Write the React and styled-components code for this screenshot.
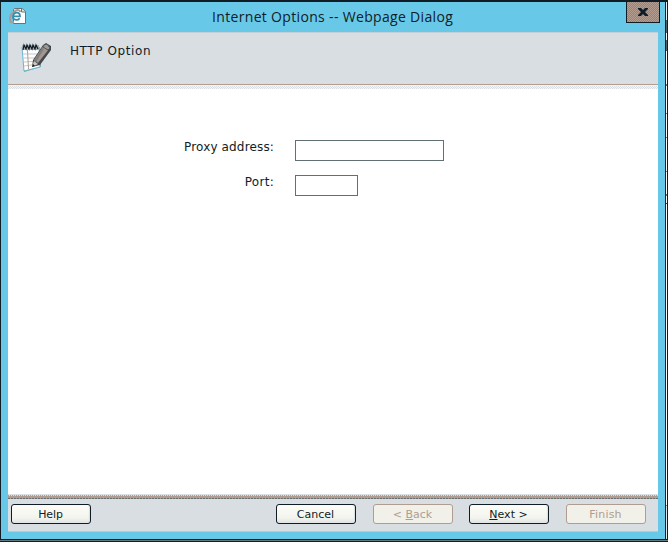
import React from 'react';
import styled, { createGlobalStyle } from 'styled-components';

const ink = '#101c26';
const blue = '#68c8e8';
const panel = '#d9dee2';
const taupe = '#b09c90';

const GlobalStyle = createGlobalStyle`
  * { box-sizing: border-box; }
  body { margin: 0; background: ${ink}; overflow: hidden; }
`;

const Desktop = styled.div`
  display: grid;
  grid-template-columns: 666px 1px 1px;
  width: 668px;
  height: 542px;
  background: linear-gradient(${ink}, ${ink}) 0 0 / 100% 540px no-repeat, linear-gradient(#68797e, #68797e) 0 540px / 100% 1px no-repeat, ${ink};
`;

const WindowFrame = styled.section`
  display: flex;
  flex-direction: column;
  width: 666px;
  height: 540px;
  padding: 0 7px 7px;
  background: ${blue};
  border: solid ${ink};
  border-width: 2px 1px 1px;
  color: ${ink};
`;

const BackgroundEdge = styled.div`
  margin: 2px 0 0;
  height: 537px;
  background: linear-gradient(#e8eff1 0 18px, #53656c 18px 31px, #fff 31px 38px, #53656c 38px 49px, #fff 49px 82px, #697b80 82px 84px, #fff 84px 111px, #697b80 111px 112px, #fff 112px 135px, #697b80 135px 136px, #fff 136px 169px, #697b80 169px 170px, #fff 170px 192px, #697b80 192px 194px, #fff 194px 201px, #33454c 201px 202px, #fff 202px 503px, #697b80 503px 504px, #dfe8eb 504px);
`;

const TitleBar = styled.header`
  display: grid;
  grid-template-columns: 40px 1fr 40px;
  height: 30px;
  flex: none;
`;

const PageIcon = styled.svg`
  width: 18px;
  height: 18px;
  margin: 5px 0 0 1px;
`;

const Title = styled.h1`
  margin: 0;
  padding: 5px 0 0 164px;
  font: 400 14px/20px "Open Sans", sans-serif;
  letter-spacing: .33px;
  white-space: nowrap;
`;

const CloseButton = styled.button`
  display: flex;
  align-items: center;
  justify-content: center;
  width: 34px;
  height: 21px;
  margin-left: 8px;
  padding: 0;
  border: 1px solid ${ink};
  border-top: 0;
  background: repeating-conic-gradient(#b39d91 0 25%, #84888a 0 50%) 0 0 / 2px 2px;
`;

const Content = styled.main`
  display: flex;
  flex-direction: column;
  width: 650px;
  height: 500px;
  background: #fff;
`;

const Banner = styled.div`
  display: flex;
  height: 53px;
  flex: none;
  background: ${panel};
  border-top: 1px solid #c4d0d5;
  border-bottom: 1px solid ${taupe};
`;

const BannerShade = styled.div`
  height: 4px;
  flex: none;
  background: linear-gradient(#f4f3f2 0 1px, transparent 1px), repeating-conic-gradient(#d9dee2 0 25%, #f7f6f3 0 50%) 0 0 / 2px 2px;
`;

const NotebookIcon = styled.svg`
  width: 34px;
  height: 34px;
  margin: 8px 0 0 10px;
`;

const StepTitle = styled.h2`
  margin: 9px 0 0 18px;
  font: 400 12px/18px "DejaVu Sans", sans-serif;
  letter-spacing: .6px;
  white-space: nowrap;
`;

const Form = styled.form`
  display: grid;
  align-content: start;
  flex: 1;
  gap: 14px;
  padding-top: 51px;
`;

const Field = styled.label`
  display: grid;
  grid-template-columns: 266px 1fr;
  column-gap: 21px;
  height: 21px;
`;

const FieldLabel = styled.span`
  text-align: right;
  font: 400 12px/14px "DejaVu Sans", sans-serif;
  letter-spacing: ${p => p.$spacing}px;
  white-space: nowrap;
`;

const TextInput = styled.input`
  width: ${p => p.$width}px;
  height: 21px;
  padding: 1px 3px;
  border: 1px solid #607074;
  border-radius: 0;
  background: #fff;
  font: 12px "DejaVu Sans", sans-serif;
  outline: 0;
`;

const FooterRule = styled.div`
  height: 5px;
  flex: none;
  background:
    repeating-linear-gradient(90deg, #607074 0 2px, ${taupe} 2px 3px) 0 4px / 100% 1px no-repeat,
    linear-gradient(${taupe}, ${taupe}) 0 2px / 100% 2px no-repeat,
    repeating-linear-gradient(90deg, ${taupe} 0 1px, #dce0e2 1px 2px) 0 1px / 100% 1px no-repeat,
    #dce0e2;
`;

const Footer = styled.footer`
  display: flex;
  align-items: flex-start;
  height: 33px;
  flex: none;
  padding: 5px 12px 0 3px;
  background: ${panel};
  border-bottom: 1px solid #c2c5c6;
`;

const NavigationButtons = styled.div`
  display: flex;
  margin-left: auto;
  gap: 17px;
`;

const StepButtons = styled.div`
  display: flex;
  gap: 16px;
`;

const ActionButton = styled.button`
  width: 80px;
  height: 20px;
  margin: 0;
  padding: 0 1px 0 0;
  border: 1px solid ${ink};
  border-radius: 3px;
  background: linear-gradient(#fdfdf9, #f3f4ed 70%, #dfe4e5);
  box-shadow: inset -1px 0 1px #d9dee2;
  color: ${ink};
  font: 400 11px/17px "DejaVu Sans", sans-serif;
  letter-spacing: ${p => p.$spacing || 0}px;
  white-space: nowrap;

  &:disabled {
    border-color: ${taupe};
    color: ${taupe};
    background: radial-gradient(circle, #d9dee2 .5px, transparent .7px) 1px 1px / 4px 4px, #f1f1e9;
    box-shadow: none;
  }
`;

function BrowserPage() {
  return (
    <PageIcon viewBox="0 0 18 18" aria-hidden="true">
      <path d="M5.5 1.5H13l3.5 3v12h-12V3z" fill="#fff" stroke="#657477" />
      <path d="M12.5 2v3H16" fill="#e8eaea" stroke="#657477" />
      <path d="M5 15C-1 17 0 8 5 5c3-3 6-2 6 0" fill="none" stroke="#a69b95" strokeWidth="2" />
      <path d="M4 9.3h7c0-5-6-5-7 0-.5 4 4.5 4.5 6.7 2" fill="none" stroke="#398dac" strokeWidth="1.8" />
    </PageIcon>
  );
}

function Notebook() {
  return (
    <NotebookIcon viewBox="0 0 34 34" aria-hidden="true">
      <path d="M5 6h17l1 20-17 5z" fill="#819ba6" />
      <path d="M4 6h17l1 20L6 30z" fill="#fff" stroke="#68b7d1" />
      <path d="M5 13h16M5 17h16M6 21l15-1M6 25l15-2" stroke="#c3c9cc" />
      <path d="m9.5 9 1 19" stroke="#b09c90" />
      <path d="M4 4h17v5H4z" fill="#a5acaf" />
      <path d="m5 9 1-5 2 4 1-4 2 4 1-4 2 4 1-4 2 4 1-4 2 4" fill="none" stroke={ink} strokeWidth="1.2" />
      <path d="m15 19-1 7 8-2 11-15V5l-5-3-3 2z" fill="#40494b" />
      <path d="m16 19 10-15 5 4-11 14z" fill="#a3958d" />
      <path d="m16 19 8-12 2 1-8 13z" fill="#7d807f" />
      <path d="m26 4 3-1 3 4-2 2-5-3z" fill="#9d9a96" stroke="#4c595c" />
      <path d="m16 20 4 3-6 3z" fill="#d2c5b9" />
      <path d="m14 26 1-3 2 2z" fill={ink} />
    </NotebookIcon>
  );
}

export default function App() {
  return (
    <>
      <GlobalStyle />
      <Desktop>
        <WindowFrame>
          <TitleBar>
            <BrowserPage />
            <Title>Internet Options -- Webpage Dialog</Title>
            <CloseButton aria-label="Close">
              <svg width="10" height="8" viewBox="0 0 10 8" aria-hidden="true">
                <path d="M0 0h3l2 2 2-2h3v1L7 4l3 3v1H7L5 6 3 8H0V7l3-3-3-3z" fill={ink} />
              </svg>
            </CloseButton>
          </TitleBar>
          <Content>
            <Banner>
              <Notebook />
              <StepTitle>HTTP Option</StepTitle>
            </Banner>
            <BannerShade />
            <Form>
              <Field>
                <FieldLabel $spacing={0.15}>Proxy address:</FieldLabel>
                <TextInput $width={149} />
              </Field>
              <Field>
                <FieldLabel $spacing={0.3}>Port:</FieldLabel>
                <TextInput $width={63} />
              </Field>
            </Form>
            <FooterRule />
            <Footer>
              <ActionButton $spacing={-0.15}>Help</ActionButton>
              <NavigationButtons>
                <ActionButton>Cancel</ActionButton>
                <StepButtons>
                  <ActionButton disabled>&lt; <u>B</u>ack</ActionButton>
                  <ActionButton><u>N</u>ext &gt;</ActionButton>
                </StepButtons>
                <ActionButton disabled $spacing={0.2}>Finish</ActionButton>
              </NavigationButtons>
            </Footer>
          </Content>
        </WindowFrame>
        <BackgroundEdge />
      </Desktop>
    </>
  );
}
